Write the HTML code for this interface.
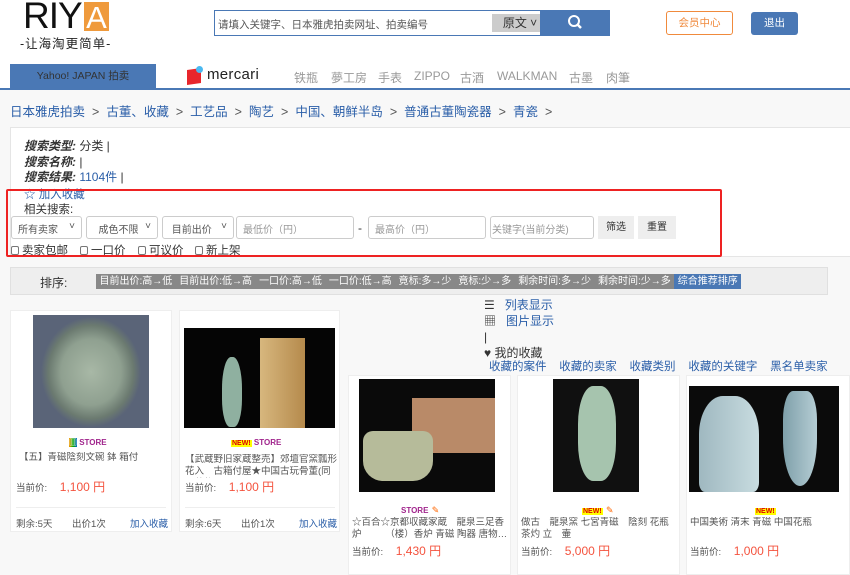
<!DOCTYPE html>
<html><head><meta charset="utf-8">
<style>
*{margin:0;padding:0;box-sizing:border-box}
body{width:850px;height:566px;overflow:hidden;background:#f8f8f8;font-family:"Liberation Sans","Noto Sans CJK SC",sans-serif;font-size:12px;color:#333;position:relative}
.abs{position:absolute}
.top{position:absolute;left:0;top:0;width:850px;height:89px;background:#fff}
.logo{left:23px;top:-5px;font-size:37px;letter-spacing:-1px;color:#111;font-family:"Liberation Sans",sans-serif}
.logoA{left:84px;top:2px;width:25px;height:29px;background:#ef9a3c;color:#fff;font-size:31px;line-height:31px;text-align:center}
.sub{left:20px;top:33px;font-size:12.5px;color:#222;letter-spacing:1px}
.search{left:214px;top:10px;width:327px;height:26px;border:1px solid #4a78b5;background:#fff;font-size:10.5px;color:#555;padding:6px 3px}
.yuan{left:492px;top:14px;width:56px;height:18px;background:#ccc;font-size:12px;text-align:center;line-height:18px;color:#333}
.sbtn{left:540px;top:10px;width:70px;height:26px;background:#4a78b5}
.vip{left:666px;top:11px;width:67px;height:24px;border:1px solid #f08a3c;border-radius:3px;color:#f08a3c;font-size:10.5px;text-align:center;line-height:22px;background:#fff}
.out{left:751px;top:12px;width:47px;height:23px;background:#4a78b5;border-radius:3px;color:#fff;font-size:10.5px;text-align:center;line-height:23px}
.yahoo{left:10px;top:64px;width:146px;height:25px;background:#4a78b5;color:#333;font-size:10.5px;text-align:center;line-height:25px}
.navline{left:0;top:88px;width:850px;height:2px;background:#4a78b5}
.nav{top:69px;font-size:12px;color:#999}
.bc{left:10px;top:101px;font-size:12.5px;color:#2a5ea8}
.bc span{color:#555;margin:0 7px}
.info{left:10px;top:127px;width:840px;height:130px;background:#fff;border:1px solid #e5e5e5;border-right:none}
.lbl{font-style:italic;font-weight:bold;color:#333;font-size:12px}
.red{left:6px;top:189px;width:716px;height:68px;border:2px solid #e22;border-radius:2px}
.sel{top:216px;height:23px;border:1px solid #ccc;border-radius:3px;background:#fff;font-size:10px;color:#555;padding:4px 6px}
.btn{top:216px;height:23px;background:#eee;font-size:10px;text-align:center;line-height:23px;color:#333}
.cb{top:242px;font-size:11.5px;color:#333}
.cb i{display:inline-block;width:8px;height:9px;border:1px solid #777;border-radius:2px;margin-right:3px;vertical-align:-1px}
.sortbar{left:10px;top:267px;width:818px;height:28px;background:#eee;border:1px solid #e0e0e0}
.sorts{left:96px;top:274px;height:15px;display:flex;font-size:10px;color:#fff;line-height:15px}
.sorts div{background:#888;padding:0 3.5px}
.card{position:absolute;background:#fff;border:1px solid #eee}
.price{color:#f4533e;font-size:12px}
.sm{font-size:9.5px;color:#555}
.tt{font-size:9.5px;color:#555;line-height:12px;height:24px;overflow:hidden}
.ft{font-size:9.5px;color:#555}
.store{font-size:8px;font-weight:bold;color:#a0248c}
.new{font-size:7px;font-weight:bold;color:#d00;background:#ff0;padding:0 1px}
</style></head><body>
<div class="top"></div>
<div class="abs logo">RIY</div>
<div class="abs logoA">A</div>
<div class="abs sub">-让海淘更简单-</div>
<div class="abs search">请填入关键字、日本雅虎拍卖网址、拍卖编号</div>
<div class="abs yuan">原文 ˅</div>
<div class="abs sbtn"><svg width="70" height="26"><circle cx="34" cy="11" r="5" fill="none" stroke="#fff" stroke-width="2"/><line x1="37.5" y1="14.5" x2="41" y2="18" stroke="#fff" stroke-width="2.5"/></svg></div>
<div class="abs vip">会员中心</div>
<div class="abs out">退出</div>
<div class="abs yahoo">Yahoo! JAPAN 拍卖</div>
<div class="abs" style="left:187px;top:69px;width:14px;height:15px;background:#e8262c;transform:skewY(-8deg)"></div>
<div class="abs" style="left:196px;top:66px;width:7px;height:7px;border-radius:50%;background:#4ab8f0"></div>
<div class="abs" style="left:207px;top:66px;font-size:15px;color:#222;letter-spacing:0.3px">mercari</div>
<div class="abs nav" style="left:294px">铁瓶</div>
<div class="abs nav" style="left:331px">夢工房</div>
<div class="abs nav" style="left:378px">手表</div>
<div class="abs nav" style="left:414px">ZIPPO</div>
<div class="abs nav" style="left:460px">古酒</div>
<div class="abs nav" style="left:497px">WALKMAN</div>
<div class="abs nav" style="left:569px">古墨</div>
<div class="abs nav" style="left:606px">肉筆</div>
<div class="abs navline"></div>
<div class="abs bc">日本雅虎拍卖<span>&gt;</span>古董、收藏<span>&gt;</span>工艺品<span>&gt;</span>陶艺<span>&gt;</span>中国、朝鲜半岛<span>&gt;</span>普通古董陶瓷器<span>&gt;</span>青瓷<span>&gt;</span></div>
<div class="abs info"></div>
<div class="abs" style="left:24px;top:139px;line-height:15.5px"><span class="lbl">搜索类型:</span> 分类 |<br><span class="lbl">搜索名称:</span> |<br><span class="lbl">搜索结果:</span> <span style="color:#2a5ea8">1104件</span> |</div>
<div class="abs" style="left:24px;top:186px;color:#2a5ea8;font-size:11.5px">☆ 加入收藏</div>
<div class="abs" style="left:24px;top:201px;font-size:11.5px">相关搜索:</div>
<div class="abs red"></div>
<div class="abs sel" style="left:11px;width:71px">所有卖家 <span style="float:right">˅</span></div>
<div class="abs sel" style="left:86px;width:72px">&nbsp;&nbsp;成色不限 <span style="float:right">˅</span></div>
<div class="abs sel" style="left:162px;width:72px">&nbsp;目前出价 <span style="float:right">˅</span></div>
<div class="abs sel" style="left:236px;width:118px;color:#999">最低价（円）</div>
<div class="abs" style="left:358px;top:221px">-</div>
<div class="abs sel" style="left:368px;width:118px;color:#999">最高价（円）</div>
<div class="abs sel" style="left:490px;width:104px;color:#999;padding:4px 1px">关键字(当前分类)</div>
<div class="abs btn" style="left:598px;width:36px">筛选</div>
<div class="abs btn" style="left:638px;width:38px">重置</div>
<div class="abs cb" style="left:11px"><i></i>卖家包邮</div>
<div class="abs cb" style="left:80px"><i></i>一口价</div>
<div class="abs cb" style="left:138px"><i></i>可议价</div>
<div class="abs cb" style="left:195px"><i></i>新上架</div>
<div class="abs sortbar"></div>
<div class="abs" style="left:40px;top:274px;font-size:12px">排序:</div>
<div class="abs sorts"><div>目前出价:高→低</div><div>目前出价:低→高</div><div>一口价:高→低</div><div>一口价:低→高</div><div>竟标:多→少</div><div>竟标:少→多</div><div>剩余时间:多→少</div><div>剩余时间:少→多</div><div style="background:#4a78b5">综合推荐排序</div></div>

<div class="abs" style="left:484px;top:297px;font-size:12px;line-height:16px;color:#2a5ea8">
<div><span style="color:#333">☰</span>&nbsp;&nbsp; 列表显示</div>
<div><span style="color:#333">▦</span>&nbsp;&nbsp; 图片显示</div>
<div style="color:#333">|</div>
<div style="color:#333">♥ 我的收藏</div>
</div>
<div class="abs" style="left:489px;top:358px;font-size:11.5px;color:#2a5ea8">收藏的案件 &nbsp;&nbsp;&nbsp;收藏的卖家 &nbsp;&nbsp;&nbsp;收藏类别 &nbsp;&nbsp;&nbsp;收藏的关键字 &nbsp;&nbsp;&nbsp;黑名单卖家</div>

<div class="card" style="left:10px;top:310px;width:162px;height:222px">
 <div class="abs" style="left:22px;top:4px;width:116px;height:113px;background:radial-gradient(ellipse 50px 55px at 58px 57px,#a8b8a6 0,#8fa090 60%,#6b7a70 85%,#5a6478 100%)"></div>
 <div class="abs" style="left:58px;top:123px" ><span class="store" style="background:linear-gradient(90deg,#f90,#0a0,#06c);color:#fff">▥</span><span class="store"> STORE</span></div>
 <div class="abs tt" style="left:8px;top:141px;width:150px">【五】青磁陰刻文碗 鉢 箱付</div>
 <div class="abs sm" style="left:5px;top:167px">当前价: <span class="price" style="margin-left:10px">1,100 円</span></div>
 <div class="abs" style="left:5px;top:196px;width:150px;height:1px;background:#eee"></div>
 <div class="abs ft" style="left:5px;top:205px">剩余:5天</div>
 <div class="abs ft" style="left:61px;top:205px">出价1次</div>
 <div class="abs ft" style="left:119px;top:205px;color:#2a5ea8">加入收藏</div>
</div>
<div class="card" style="left:179px;top:310px;width:161px;height:222px">
 <div class="abs" style="left:4px;top:17px;width:151px;height:100px;background:#050505"></div>
 <div class="abs" style="left:42px;top:46px;width:20px;height:70px;border-radius:45% 45% 40% 40%;background:#8fb0a0"></div>
 <div class="abs" style="left:80px;top:27px;width:45px;height:90px;background:linear-gradient(90deg,#d7b77e,#b58a4c)"></div>
 <div class="abs" style="left:51px;top:123px"><span class="new">NEW!</span><span class="store"> STORE</span></div>
 <div class="abs tt" style="left:5px;top:143px;width:152px">【武蔵野旧家蔵整売】郊壇官窯瓢形花入　古箱付屋★中国古玩骨董(同日落札…</div>
 <div class="abs sm" style="left:5px;top:167px">当前价: <span class="price" style="margin-left:10px">1,100 円</span></div>
 <div class="abs" style="left:5px;top:196px;width:150px;height:1px;background:#eee"></div>
 <div class="abs ft" style="left:5px;top:205px">剩余:6天</div>
 <div class="abs ft" style="left:61px;top:205px">出价1次</div>
 <div class="abs ft" style="left:119px;top:205px;color:#2a5ea8">加入收藏</div>
</div>
<div class="card" style="left:348px;top:375px;width:163px;height:200px">
 <div class="abs" style="left:10px;top:3px;width:136px;height:113px;background:#0a0a0a"></div>
 <div class="abs" style="left:63px;top:22px;width:83px;height:55px;background:#b98a68"></div>
 <div class="abs" style="left:14px;top:55px;width:70px;height:50px;border-radius:10px 10px 20px 20px;background:#b6bb9a"></div>
 <div class="abs" style="left:52px;top:126px"><span class="store"> STORE</span> <span style="color:#f60;font-size:9px">✎</span></div>
 <div class="abs tt" style="left:3px;top:141px;width:156px">☆百合☆京都収藏家蔵　龍泉三足香炉　　　（楼）香炉 青磁 陶器 唐物…</div>
 <div class="abs sm" style="left:3px;top:166px">当前价: <span class="price" style="margin-left:10px">1,430 円</span></div>
</div>
<div class="card" style="left:517px;top:375px;width:163px;height:200px">
 <div class="abs" style="left:35px;top:3px;width:86px;height:113px;background:#101010"></div>
 <div class="abs" style="left:60px;top:10px;width:38px;height:95px;border-radius:40%;background:#a6c4ae"></div>
 <div class="abs" style="left:64px;top:126px"><span class="new">NEW!</span> <span style="color:#f60;font-size:9px">✎</span></div>
 <div class="abs tt" style="left:3px;top:141px;width:156px">做古　龍泉窯 七宮青磁　陰刻 花瓶 茶灼 立　壷</div>
 <div class="abs sm" style="left:3px;top:166px">当前价: <span class="price" style="margin-left:10px">5,000 円</span></div>
</div>
<div class="card" style="left:686px;top:375px;width:164px;height:200px">
 <div class="abs" style="left:2px;top:10px;width:150px;height:106px;background:#0b0b0b"></div>
 <div class="abs" style="left:12px;top:20px;width:60px;height:96px;border-radius:40% 40% 10% 10%;background:linear-gradient(90deg,#9fb8c0,#c8dce0)"></div>
 <div class="abs" style="left:96px;top:15px;width:34px;height:95px;border-radius:30% 30% 50% 50%;background:linear-gradient(90deg,#7fa0aa,#b5cdd4)"></div>
 <div class="abs" style="left:68px;top:126px"><span class="new">NEW!</span></div>
 <div class="abs tt" style="left:3px;top:141px;width:156px">中国美術 清末 青磁 中国花瓶</div>
 <div class="abs sm" style="left:3px;top:166px">当前价: <span class="price" style="margin-left:10px">1,000 円</span></div>
</div>
</body></html>
